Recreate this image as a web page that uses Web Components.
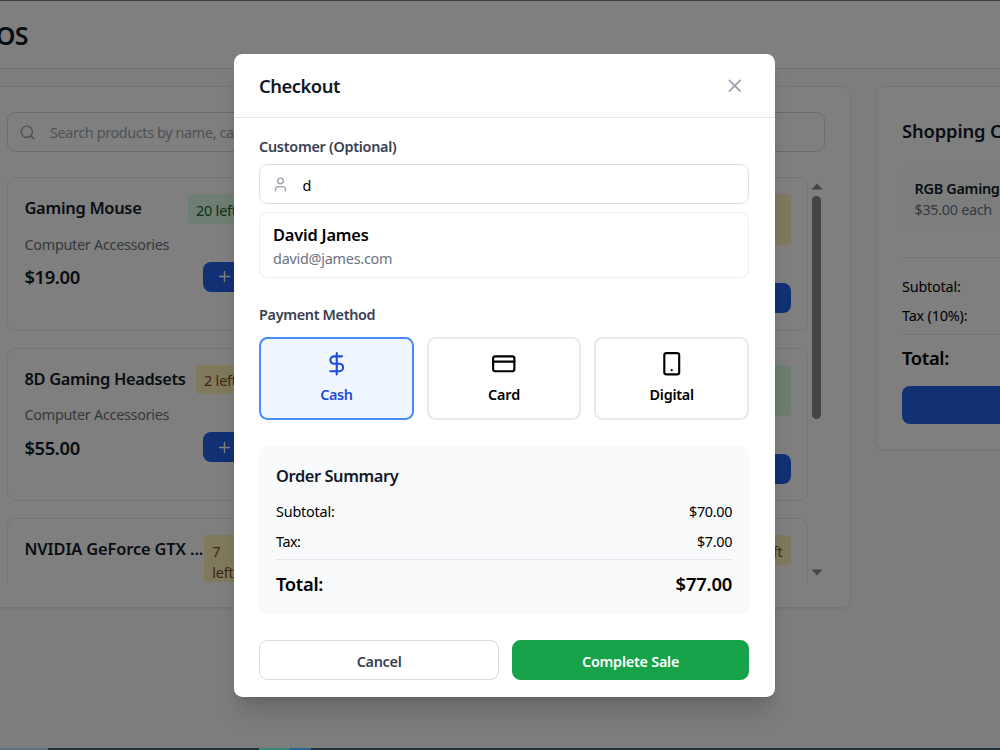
<!DOCTYPE html>
<html lang="en">
<head>
<meta charset="utf-8">
<title>POS</title>
<style>
  body {
    margin: 0;
    width: 1000px;
    height: 750px;
    overflow: hidden;
    font-family: "Noto Sans", "Open Sans", sans-serif;
    font-size: 14.4px;
    color: #000;
  }
</style>
</head>
<body>
<pos-app></pos-app>

<script>
// stroke icons on a 24x24 grid
const ICONS = {
  x: '<path d="M18 6 6 18M6 6l12 12"/>',
  plus: '<path d="M5 12h14M12 5v14"/>',
  search: '<circle cx="11" cy="11" r="8"/><path d="m21 21-4.3-4.3"/>',
  user: '<path d="M19 21v-2a4 4 0 0 0-4-4H9a4 4 0 0 0-4 4v2"/><circle cx="12" cy="7" r="4"/>',
  dollar: '<path d="M12 2v20M17 5H9.5a3.5 3.5 0 0 0 0 7h5a3.5 3.5 0 0 1 0 7H6"/>',
  card: '<rect x="2" y="5" width="20" height="14" rx="2"/><path d="M2 10h20"/>',
  phone: '<rect x="5" y="2" width="14" height="20" rx="2"/><path d="M12 18h.01"/>'
};

class BaseElement extends HTMLElement {
  constructor() {
    super();
    this.attachShadow({ mode: "open" });
  }

  attr(name, fallback = "") {
    return this.getAttribute(name) || fallback;
  }

  connectedCallback() {
    this.shadowRoot.innerHTML = `
      <style>
        * { box-sizing: border-box; }
        :host { display: block; box-sizing: border-box; }
      </style>
      ${this.render()}
    `;
  }
}

class PosIcon extends BaseElement {
  render() {
    const size = this.attr("size", "17");
    return `
      <style>
        :host { display: inline-block; flex: none; width: ${size}px; height: ${size}px; }
        svg { display: block; width: 100%; height: 100%; }
      </style>
      <svg viewBox="0 0 24 24" fill="none" stroke="currentColor" stroke-width="2"
        stroke-linecap="round" stroke-linejoin="round">${ICONS[this.attr("name")]}</svg>
    `;
  }
}

// text line: size sm | md | lg | xl, optional bold, track = letter spacing in px
class PosText extends BaseElement {
  render() {
    const sizes = { sm: "14.4px/21px", md: "16.4px/27px", lg: "18.4px/30px", xl: "25px/34px" };
    return `
      <style>
        :host {
          font: ${this.hasAttribute("bold") ? 600 : 400} ${sizes[this.attr("size", "sm")]} "Noto Sans", "Open Sans", sans-serif;
          letter-spacing: ${this.attr("track", "-0.25")}px;
          white-space: nowrap;
        }
      </style>
      <slot></slot>
    `;
  }
}

class PosField extends BaseElement {
  render() {
    return `
      <style>
        :host {
          display: flex;
          align-items: center;
          height: 40px;
          padding: 0 12px;
          border: 1px solid #d1d5db;
          border-radius: 8.5px;
          background: #fff;
        }
        pos-icon { color: #9ca3af; margin: 1px 14px 0 -.5px; }
        ::slotted(*) { padding-top: 2px; }
      </style>
      <pos-icon name="${this.attr("icon")}"></pos-icon>
      <slot></slot>
    `;
  }
}

class PosProduct extends BaseElement {
  render() {
    return `
      <style>
        :host {
          padding: 16px 16px 16px 17px;
          border: 1px solid #e9ebee;
          border-radius: 8.5px;
          min-width: 0;
        }
        .head { display: flex; justify-content: space-between; align-items: flex-start; min-height: 29.75px; }
        .head pos-text { min-width: 0; }
        .badge {
          padding: 5.75px 8.5px 2.75px;
          border-radius: 4px;
          background: #fef3bd;
          color: #854d0e;
          font-size: 14.4px;
          line-height: 21.25px;
          letter-spacing: -.2px;
        }
        .badge.ok { background: #dcfce7; color: #166534; }
        .badge.narrow { width: 41.5px; flex: none; }
        .badge.tall { height: 51px; }
        .category { color: #6b7280; margin: 10px 0 7px; }
        .foot { display: flex; justify-content: space-between; align-items: center; height: 30px; }
        .foot pos-text { padding-top: 1px; }
        .add {
          display: flex;
          align-items: center;
          justify-content: center;
          width: 42.5px;
          height: 30px;
          border-radius: 8px;
          background: #2563eb;
          color: #fff;
        }
      </style>
      <div class="head">
        <pos-text size="md" bold track="${this.attr("track", "-0.28")}" style="color:#111827"><slot></slot></pos-text>
        <div class="badge ${this.attr("badge")}">${this.attr("stock")}</div>
      </div>
      <pos-text class="category" track="-0.28">${this.attr("category", "&nbsp;")}</pos-text>
      <div class="foot">
        <pos-text size="lg" bold track="-0.4" style="color:#111827">${this.attr("price")}</pos-text>
        <div class="add"><pos-icon name="plus"></pos-icon></div>
      </div>
    `;
  }
}

class PosPanel extends BaseElement {
  render() {
    return `
      <style>
        :host {
          padding: 24.5px;
          border: 1px solid #e9ebee;
          border-radius: 8.5px;
          background: #fff;
          box-shadow: 0 1px 2px rgba(0, 0, 0, .07);
        }
      </style>
      <slot></slot>
    `;
  }
}

class PosScroller extends BaseElement {
  render() {
    return `
      <style>
        :host { display: flex; height: 404.5px; overflow: hidden; }
        .view { flex: 1; min-width: 0; }
        .bar { width: 17px; display: flex; flex-direction: column; align-items: center; padding: 6px 0 6px; color: #888; }
        .bar svg { display: block; width: 12px; height: 7px; fill: currentColor; }
        .thumb { width: 9.5px; height: 223px; margin: 6px 0 auto; border-radius: 5px; background: #888; }
      </style>
      <div class="view"><slot></slot></div>
      <div class="bar">
        <svg viewBox="0 0 12 7"><path d="M6 .5 11.5 6.5H.5z"/></svg>
        <div class="thumb"></div>
        <svg viewBox="0 0 12 7"><path d="M.5 .5h11L6 6.5z"/></svg>
      </div>
    `;
  }
}

class PosRow extends BaseElement {
  render() {
    return `
      <style>
        :host { display: flex; justify-content: space-between; align-items: center; }
      </style>
      <slot></slot>
    `;
  }
}

class PosCart extends BaseElement {
  render() {
    return `
      <style>
        :host { height: 100%; padding-left: .5px; }
        .item { margin-top: 20px; height: 66.5px; padding: 12px 12.5px; border-radius: 8px; background: #f8fdfb; }
        .price { color: #6b7280; }
        .totals { margin-top: 24.5px; padding-top: 18px; border-top: 1px solid #e5e7eb; }
        .sum { margin-top: 8px; padding-top: 8px; border-top: 1px solid #e5e7eb; }
        .pay { height: 38px; margin-top: 13px; border-radius: 8px; background: #2563eb; }
      </style>
      <pos-text size="lg" bold track="-0.15" style="margin-top:4px;color:#111827">Shopping Cart</pos-text>
      <div class="item">
        <pos-text bold track="-0.28" style="color:#111827">RGB Gaming Keyboard</pos-text>
        <pos-text class="price" track="-0.3">$35.00 each</pos-text>
      </div>
      <div class="totals">
        <pos-text track="-0.2">Subtotal:</pos-text>
        <pos-text track="-0.18" style="margin-top:8.5px">Tax (10%):</pos-text>
      </div>
      <div class="sum"><pos-text size="lg" bold track="-0.35">Total:</pos-text></div>
      <div class="pay"></div>
    `;
  }
}

class PosPayment extends BaseElement {
  render() {
    return `
      <style>
        :host {
          flex: 1;
          display: flex;
          flex-direction: column;
          align-items: center;
          height: 83px;
          padding-top: 12px;
          border: 2px solid #e8eaed;
          border-radius: 8.5px;
        }
        :host([selected]) { border-color: #4a8cf7; background: #eff6ff; color: #1d4ed8; }
        pos-text { margin-top: 7px; }
      </style>
      <pos-icon name="${this.attr("icon")}" size="25.5"></pos-icon>
      <pos-text bold track="${this.attr("track")}"><slot></slot></pos-text>
    `;
  }
}

class PosButton extends BaseElement {
  render() {
    return `
      <style>
        :host {
          display: flex;
          align-items: center;
          justify-content: center;
          height: 40px;
          padding-top: 2px;
          border: 1px solid #d6d9de;
          border-radius: 8.5px;
          color: #374151;
        }
        :host([primary]) { border-color: #16a34a; background: #16a34a; color: #fff; }
      </style>
      <pos-text bold track="${this.attr("track")}"><slot></slot></pos-text>
    `;
  }
}

class PosCheckout extends BaseElement {
  render() {
    return `
      <style>
        :host {
          width: 540.5px;
          height: 643px;
          border-radius: 8.5px;
          background: #fff;
          box-shadow: 0 20px 25px -5px rgba(0, 0, 0, .14), 0 8px 12px -6px rgba(0, 0, 0, .12);
        }
        header {
          display: flex;
          justify-content: space-between;
          align-items: center;
          height: 64px;
          padding: 0 29px 0 25px;
          border-bottom: 1px solid #e5e7eb;
          color: #111827;
        }
        header pos-icon { color: #9ca3af; }
        main { padding: 18px 25.5px 0 25px; }
        .label { color: #374151; }
        .result {
          height: 65.5px;
          margin-top: 8px;
          padding: 8px 13px;
          border: 1px solid #eceef1;
          border-radius: 8.5px;
        }
        .methods { display: flex; gap: 13px; margin-top: 12px; }
        .summary { height: 168px; margin-top: 26px; padding: 16px 17px; border-radius: 8.5px; background: #f9fafb; }
        .total { margin-top: 7px; padding-top: 9px; border-top: 1px solid #e5e7eb; }
        .actions { display: grid; grid-template-columns: 240px 1fr; gap: 13px; margin-top: 26px; }
      </style>
      <header>
        <pos-text size="lg" bold track="-0.5">Checkout</pos-text>
        <pos-icon name="x" size="21.5"></pos-icon>
      </header>
      <main>
        <pos-text class="label" bold track="-0.27">Customer (Optional)</pos-text>
        <pos-field icon="user" style="margin-top:7px;border-color:#dadde2"><pos-text>d</pos-text></pos-field>
        <div class="result">
          <pos-text size="md" bold track="-0.2">David James</pos-text>
          <pos-text track="-0.25" style="color:#6b7280;margin-top:-1px;padding-top:1px">david@james.com</pos-text>
        </div>
        <pos-text class="label" bold track="-0.33" style="margin-top:26.5px">Payment Method</pos-text>
        <div class="methods">
          <pos-payment icon="dollar" track="-0.45" selected>Cash</pos-payment>
          <pos-payment icon="card" track="-0.15">Card</pos-payment>
          <pos-payment icon="phone" track="-0.25">Digital</pos-payment>
        </div>
        <div class="summary">
          <pos-text size="md" bold track="-0.41" style="color:#111827">Order Summary</pos-text>
          <pos-row style="margin-top:11.5px"><pos-text track="-0.2">Subtotal:</pos-text><pos-text track="-0.33">$70.00</pos-text></pos-row>
          <pos-row style="margin-top:9px"><pos-text track="-0.5">Tax:</pos-text><pos-text track="-0.33">$7.00</pos-text></pos-row>
          <pos-row class="total"><pos-text size="lg" bold track="-0.35">Total:</pos-text><pos-text size="lg" bold track="-0.2">$77.00</pos-text></pos-row>
        </div>
        <div class="actions">
          <pos-button track="-0.28">Cancel</pos-button>
          <pos-button track="-0.23" primary>Complete Sale</pos-button>
        </div>
      </main>
    `;
  }
}

class PosApp extends BaseElement {
  render() {
    return `
      <style>
        .screen { position: relative; height: 748px; overflow: hidden; background: #f8fdfb; }
        .page { width: 1317px; margin-left: -19px; }
        .top { height: 69px; padding-top: 17px; border-top: 1px solid #7a7a7a; border-bottom: 1px solid #e5e7eb; background: #fff; }
        .columns { display: grid; grid-template-columns: 869.5px 1fr; gap: 25.5px; margin-top: 17px; align-items: start; }
        .left { height: 522px; }
        .right { height: 363.5px; }
        .products { display: grid; grid-template-columns: repeat(3, 255.8px); grid-auto-rows: 153.5px; gap: 17px; }
        .overlay {
          position: absolute;
          inset: 0;
          display: flex;
          justify-content: center;
          padding: 54px 0 0 8.6px;
          background: rgba(0, 0, 0, .5);
        }
        .strip { display: flex; height: 2px; background: #22323a; }
        .strip i { height: 2px; }
      </style>
      <div class="screen">
        <div class="page">
          <div class="top"><pos-text size="xl" bold track="-0.6" style="color:#111827">POS</pos-text></div>
          <div class="columns">
            <pos-panel class="left">
              <pos-field icon="search"><pos-text track="-0.37" style="color:#9ca3af">Search products by name, category...</pos-text></pos-field>
              <pos-scroller style="margin-top:25.5px">
                <div class="products">
                  <pos-product category="Computer Accessories" price="$19.00" stock="20 left" badge="ok">Gaming Mouse</pos-product>
                  <pos-product></pos-product>
                  <pos-product badge="narrow tall"></pos-product>
                  <pos-product category="Computer Accessories" price="$55.00" stock="2 left" track="-0.31">8D Gaming Headsets</pos-product>
                  <pos-product></pos-product>
                  <pos-product badge="ok narrow tall"></pos-product>
                  <pos-product stock="7 left" badge="narrow" track="-0.13">NVIDIA GeForce GTX ...</pos-product>
                  <pos-product></pos-product>
                  <pos-product stock="2 left"></pos-product>
                </div>
              </pos-scroller>
            </pos-panel>
            <pos-panel class="right"><pos-cart></pos-cart></pos-panel>
          </div>
        </div>
        <div class="overlay"><pos-checkout></pos-checkout></div>
      </div>
      <div class="strip">
        <i style="width:48px;background:#5d6f83"></i>
        <i style="width:211px"></i>
        <i style="width:31px;background:#378672"></i>
        <i style="width:21px;background:#2c6594"></i>
      </div>
    `;
  }
}

customElements.define("pos-icon", PosIcon);
customElements.define("pos-text", PosText);
customElements.define("pos-field", PosField);
customElements.define("pos-product", PosProduct);
customElements.define("pos-panel", PosPanel);
customElements.define("pos-scroller", PosScroller);
customElements.define("pos-row", PosRow);
customElements.define("pos-cart", PosCart);
customElements.define("pos-payment", PosPayment);
customElements.define("pos-button", PosButton);
customElements.define("pos-checkout", PosCheckout);
customElements.define("pos-app", PosApp);
</script>
</body>
</html>
